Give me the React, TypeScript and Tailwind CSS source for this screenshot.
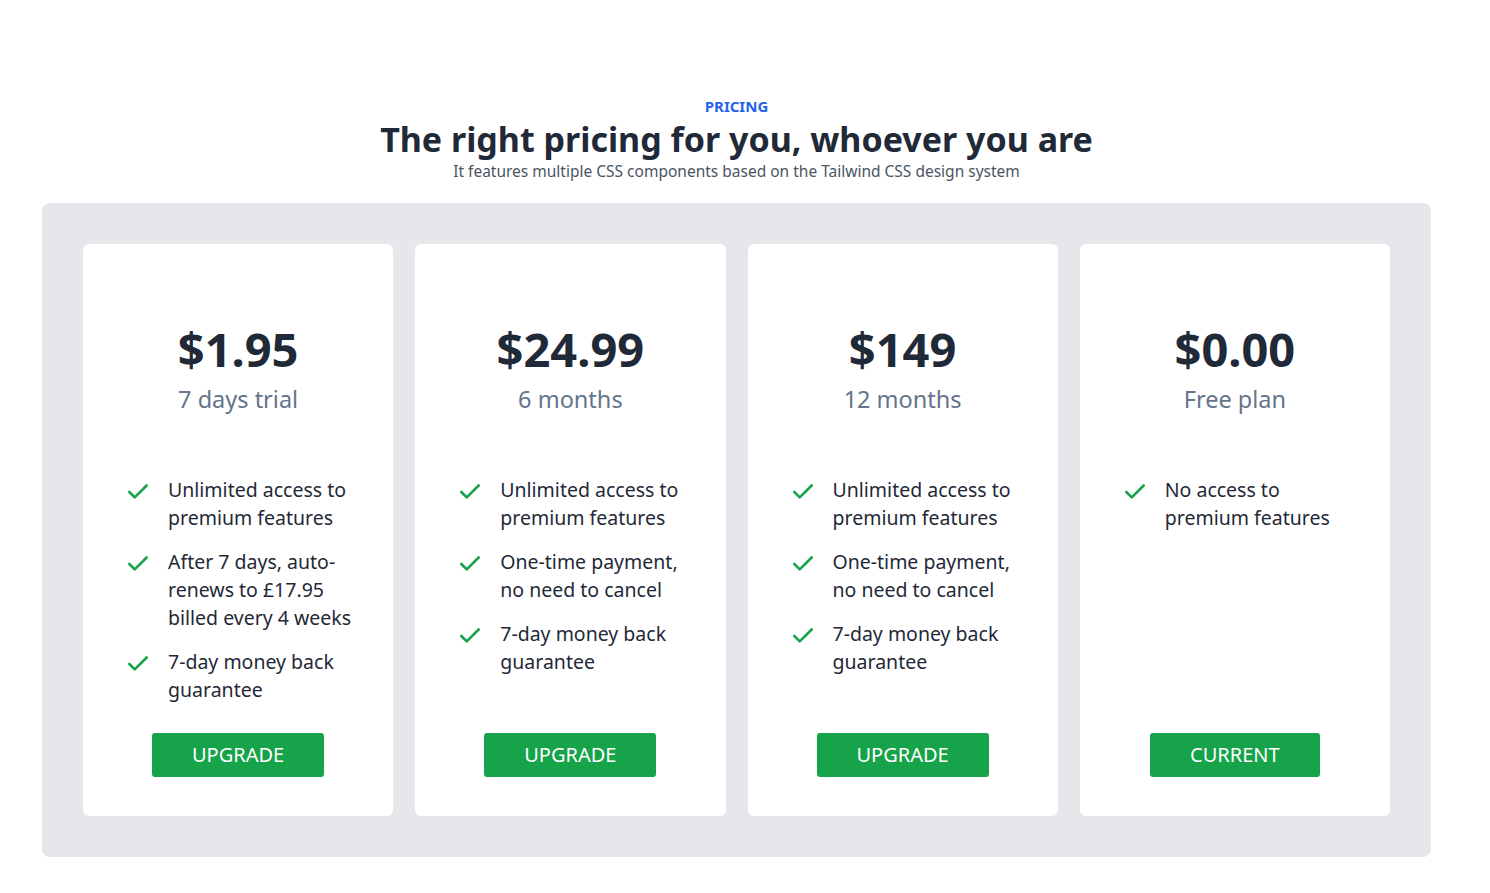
import { Check } from 'lucide-react';

type Plan = {
  price: string;
  period: string;
  features: string[][];
  cta: string;
};

const plans: Plan[] = [
  {
    price: '$1.95',
    period: '7 days trial',
    features: [
      ['Unlimited access to', 'premium features'],
      ['After 7 days, auto-', 'renews to £17.95', 'billed every 4 weeks'],
      ['7-day money back', 'guarantee'],
    ],
    cta: 'Upgrade',
  },
  {
    price: '$24.99',
    period: '6 months',
    features: [
      ['Unlimited access to', 'premium features'],
      ['One-time payment,', 'no need to cancel'],
      ['7-day money back', 'guarantee'],
    ],
    cta: 'Upgrade',
  },
  {
    price: '$149',
    period: '12 months',
    features: [
      ['Unlimited access to', 'premium features'],
      ['One-time payment,', 'no need to cancel'],
      ['7-day money back', 'guarantee'],
    ],
    cta: 'Upgrade',
  },
  {
    price: '$0.00',
    period: 'Free plan',
    features: [['No access to', 'premium features']],
    cta: 'Current',
  },
];

function PlanCard({ plan }: { plan: Plan }) {
  return (
    <div className="flex h-[572px] flex-col items-center rounded-md bg-white pt-[81px] pb-[39px]">
      <div className="text-[47px] font-bold leading-[48px] text-[#1f2937]">{plan.price}</div>
      <div className="mt-[10px] text-[23.5px] leading-[32px] text-[#64748b]">{plan.period}</div>

      <ul className="mt-[61px] w-full space-y-4 pl-[42px]">
        {plan.features.map((lines, i) => (
          <li key={i} className="flex items-start">
            <Check className="mt-[3px] h-[26px] w-[26px] shrink-0 text-[#16a34a]" strokeWidth={2.4} />
            <span className="ml-[17px] whitespace-nowrap text-[19.5px] leading-[28px] text-[#1f2937]">
              {lines.map((l, j) => (
                <span key={j} className="block">
                  {l}
                </span>
              ))}
            </span>
          </li>
        ))}
      </ul>

      <button className="mt-auto h-[44px] rounded-[3px] bg-[#16a34a] px-10 text-[20px] uppercase text-white">
        {plan.cta}
      </button>
    </div>
  );
}

export default function App() {
  return (
    <div
      className="min-h-screen bg-white"
      style={{ fontFamily: '"Noto Sans", "Open Sans", sans-serif' }}
    >
      <div className="w-[1473px] pt-[96px] pb-[36px]">
        <div className="flex flex-col items-center text-center">
          <p className="text-[15px] font-bold leading-[20px] text-[#2563eb]">PRICING</p>
          <h1 className="mt-[5px] text-[34px] font-bold leading-[36px] text-[#1f2937]">
            The right pricing for you, whoever you are
          </h1>
          <p className="mt-[3px] text-[15.5px] leading-[22px] text-[#4b5563]">
            It features multiple CSS components based on the Tailwind CSS design system
          </p>
        </div>

        <div className="mx-auto mt-[21px] grid w-[1389px] grid-cols-4 gap-[22px] rounded-lg bg-[#e5e7eb] p-[41px]">
          {plans.map((p) => (
            <PlanCard key={p.price} plan={p} />
          ))}
        </div>
      </div>
    </div>
  );
}
